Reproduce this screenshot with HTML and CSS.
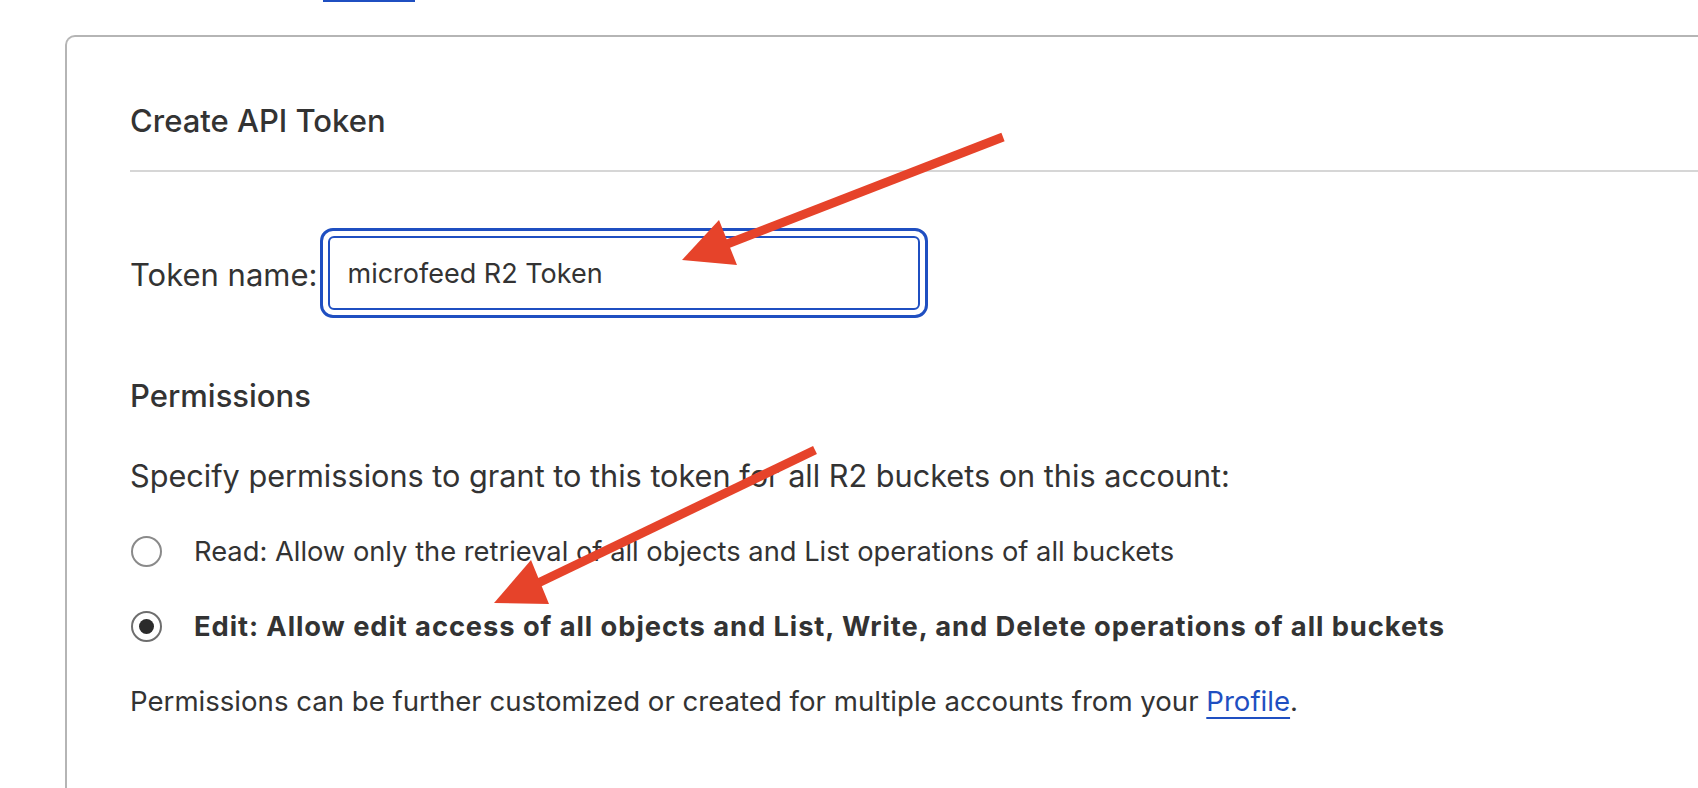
FILE: index.html
```html
<!DOCTYPE html>
<html lang="en">
<head>
    <meta charset="UTF-8">
    <meta name="viewport" content="width=device-width, initial-scale=1.0">
    <title>Create API Token</title>
    <link rel="stylesheet" href="styles.css">
</head>
<body>

    <div class="top-bar">
        <a class="top-link" href="#"></a>
    </div>

    <section class="card">
        <h2 class="card-title">Create API Token</h2>
        <hr class="divider">

        <div class="field-row">
            <label for="token_name">Token name:</label>
            <div class="input-ring">
                <input type="text" id="token_name" name="token_name" value="microfeed R2 Token">
            </div>
        </div>

        <h3 class="section-title">Permissions</h3>
        <p class="text">Specify permissions to grant to this token for all R2 buckets on this account:</p>

        <div class="option">
            <span class="radio"></span>
            <span>Read: Allow only the retrieval of all objects and List operations of all buckets</span>
        </div>

        <div class="option selected">
            <span class="radio"></span>
            <span>Edit: Allow edit access of all objects and List, Write, and Delete operations of all buckets</span>
        </div>

        <p class="text note">Permissions can be further customized or created for multiple accounts from your <a href="#">Profile</a>.</p>
    </section>

    <!-- annotation arrows drawn over the screenshot -->
    <svg class="arrows" width="1698" height="788" viewBox="0 0 1698 788">
        <line x1="1003" y1="137" x2="722" y2="246" stroke="#e6432a" stroke-width="9"/>
        <polygon points="682,260 719,220 737,265" fill="#e6432a"/>
        <line x1="815" y1="450" x2="534" y2="585" stroke="#e6432a" stroke-width="9"/>
        <polygon points="494,603 531,560 549,604" fill="#e6432a"/>
    </svg>

</body>
</html>
```

FILE: styles.css
```css
html, body {
    margin: 0;
    height: 100%;
    overflow: hidden;
}

body {
    font-family: Inter, "Noto Sans", sans-serif;
    color: #333333;
    background: #ffffff;
    position: relative;
}

.top-bar {
    height: 35px;
}

.top-link {
    display: block;
    width: 92px;
    height: 2px;
    margin-left: 323px;
    background-color: #1f4fc1;
}

/* card runs off the right and bottom edge of the window */
.card {
    margin-left: 65px;
    height: calc(100% - 35px);
    border: 2px solid #b5b5b5;
    border-right: none;
    border-bottom: none;
    border-top-left-radius: 10px;
    padding: 67px 0 0 63px;
    box-sizing: border-box;
    overflow: hidden;
}

.card-title {
    font-size: 31px;
    font-weight: 500;
    line-height: 34px;
    margin: 0;
}

.divider {
    border: none;
    height: 2px;
    background-color: #d6d6d6;
    margin: 32px 0 0 0;
}

.field-row {
    display: flex;
    align-items: center;
    gap: 3px;
    margin-top: 56px;
}

.field-row label {
    font-size: 31px;
    line-height: 34px;
    margin-top: 4px;
}

.input-ring {
    width: 608px;
    height: 90px;
    border: 3px solid #1f4fc1;
    border-radius: 13px;
    padding: 5px;
    box-sizing: border-box;
}

.input-ring input {
    width: 100%;
    height: 100%;
    box-sizing: border-box;
    border: 2px solid #1f4fc1;
    border-radius: 6px;
    padding: 0 0 0 17px;
    font-family: inherit;
    font-size: 27px;
    color: #333333;
    outline: none;
}

.section-title {
    font-size: 31px;
    font-weight: 500;
    line-height: 34px;
    margin: 61px 0 0 0;
}

.text {
    font-size: 30.65px;
    line-height: 34px;
    margin: 46px 0 0 0;
}

.option {
    display: flex;
    align-items: center;
    gap: 32px;
    height: 34px;
    margin-top: 41px;
    font-size: 27.3px;
}

.radio {
    flex: none;
    width: 31px;
    height: 31px;
    border: 2px solid #8a8a8a;
    border-radius: 50%;
    box-sizing: border-box;
    margin-left: 1px;
    display: flex;
    align-items: center;
    justify-content: center;
}

.selected {
    font-weight: 700;
    letter-spacing: 0.93px;
}

.selected .radio {
    border-color: #6e6e6e;
}

.selected .radio::after {
    content: "";
    width: 15px;
    height: 15px;
    border-radius: 50%;
    background-color: #2b2b2b;
}

.note {
    font-size: 27.6px;
    margin-top: 41px;
}

.note a {
    color: #1f4fc1;
    text-decoration: underline;
    text-underline-offset: 6px;
    text-decoration-thickness: 2px;
}

.arrows {
    position: absolute;
    left: 0;
    top: 0;
    pointer-events: none;
}
```
